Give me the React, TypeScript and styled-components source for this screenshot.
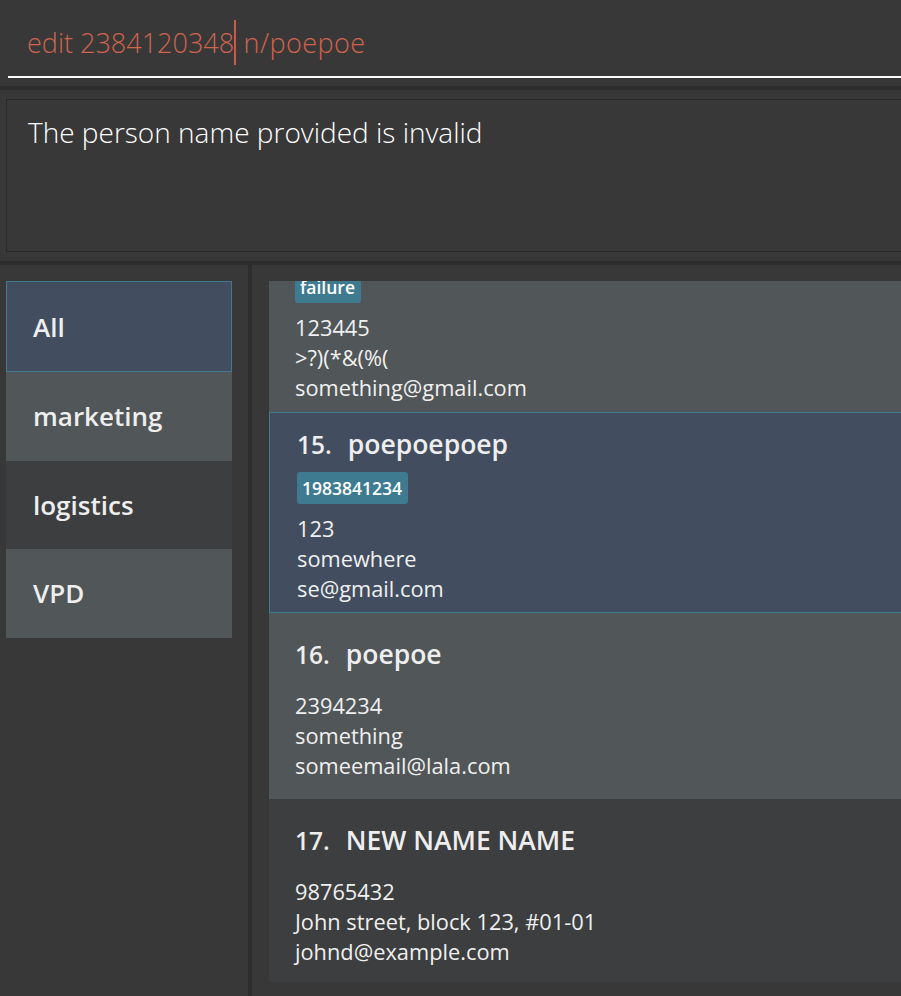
import React, { useLayoutEffect, useRef } from "react";
import styled, { createGlobalStyle } from "styled-components";

const GlobalStyle = createGlobalStyle`
  html, body { margin: 0; padding: 0; background: #383838; }
  body { font-family: "Open Sans", "Noto Sans", sans-serif; }
  * { box-sizing: border-box; }
`;

const Viewport = styled.div`
  width: 901px;
  height: 996px;
  overflow: hidden;
  background: #383838;
`;

const Frame = styled.div`
  width: 960px;
  height: 996px;
  display: flex;
  flex-direction: column;
`;

const CommandBar = styled.div`
  height: 86px;
  flex: none;
  padding-left: 8px;
`;

const CommandField = styled.div`
  height: 78px;
  border-bottom: 2px solid #ffffff;
  padding: 20px 0 0 19px;
  display: flex;
  align-items: flex-start;
  white-space: pre;
  font-weight: 300;
  font-size: 27px;
  line-height: 45px;
  color: #d0644e;
`;

const CommandTail = styled.span`
  letter-spacing: 0.4px;
`;

const Caret = styled.span`
  display: inline-block;
  width: 2px;
  height: 45px;
  background: #c95a44;
`;

const Band = styled.div`
  height: 4px;
  flex: none;
  background: #2d2d2d;
`;

const ResultPane = styled.div`
  flex: none;
  padding: 9px 0 9px 6px;
`;

const ResultBox = styled.div`
  height: 153px;
  border: 1px solid #2a2a2a;
  padding: 15px 0 0 21px;
  font-weight: 300;
  font-size: 28px;
  line-height: 34px;
  color: #ffffff;
`;

const Main = styled.div`
  flex: 1;
  min-height: 0;
  display: flex;
`;

const Sidebar = styled.div`
  width: 248px;
  flex: none;
  padding: 16px 16px 0 6px;
`;

const VDivider = styled.div`
  width: 4px;
  flex: none;
  background: #2d2d2d;
`;

type Tone = "sel" | "light" | "dark";

const toneBg = (t: Tone) =>
  t === "sel" ? "#424d5f" : t === "light" ? "#515658" : "#3c3e3f";

const TagItem = styled.div<{ $tone: Tone }>`
  height: ${(p) => (p.$tone === "sel" ? 91 : 88.5)}px;
  display: flex;
  align-items: center;
  padding-left: ${(p) => (p.$tone === "sel" ? 26 : 27)}px;
  font-weight: 600;
  font-size: 26px;
  color: #eeeeee;
  background: ${(p) => toneBg(p.$tone)};
  border: ${(p) => (p.$tone === "sel" ? "1px solid #3e7b91" : "none")};
`;

const ListPanel = styled.div`
  flex: 1;
  min-width: 0;
  padding: 16px 0 14px 17px;
  display: flex;
`;

const ListScroll = styled.div`
  flex: 1;
  overflow: hidden;
`;

const Card = styled.div<{ $tone: Tone; $tagged: boolean }>`
  display: flex;
  flex-direction: column;
  align-items: flex-start;
  padding: ${(p) => (p.$tagged ? "17px 0 9px 26px" : "26px 0 18px 26px")};
  background: ${(p) => toneBg(p.$tone)};
  border: ${(p) => (p.$tone === "sel" ? "1px solid #3e7b91" : "none")};
  ${(p) =>
    p.$tone === "sel" ? "padding-top: 16px; padding-bottom: 8px; padding-left: 27px;" : ""}
`;

const NameRow = styled.div`
  display: flex;
  align-items: baseline;
  gap: 16px;
  font-weight: 600;
  line-height: 30px;
  color: #eeeeee;
`;

const IdLabel = styled.span`
  font-size: 24.5px;
`;

const NameLabel = styled.span`
  font-size: 26.5px;
`;

const Tags = styled.div`
  display: flex;
  gap: 6px;
  margin: 12px 0 10px;
`;

const Tag = styled.span`
  height: 32px;
  padding: 0 6px 0 5px;
  border-radius: 3px;
  background: #3e7b91;
  font-weight: 600;
  font-size: 17.5px;
  line-height: 32px;
  color: #ffffff;
`;

const Details = styled.div<{ $tagged: boolean }>`
  margin-top: ${(p) => (p.$tagged ? 0 : 21)}px;
  display: flex;
  flex-direction: column;
`;

const Detail = styled.div`
  font-size: 21.8px;
  line-height: 30px;
  color: #f0f0f0;
`;

type Person = {
  id: number;
  name: string;
  tags: string[];
  phone: string;
  address: string;
  email: string;
  tone: Tone;
};

const people: Person[] = [
  { id: 14, name: "failure", tags: ["failure"], phone: "123445", address: ">?)(*&(%(", email: "something@gmail.com", tone: "light" },
  { id: 15, name: "poepoepoep", tags: ["1983841234"], phone: "123", address: "somewhere", email: "se@gmail.com", tone: "sel" },
  { id: 16, name: "poepoe", tags: [], phone: "2394234", address: "something", email: "someemail@lala.com", tone: "light" },
  { id: 17, name: "NEW NAME NAME", tags: [], phone: "98765432", address: "John street, block 123, #01-01", email: "johnd@example.com", tone: "dark" },
];

const groups: { label: string; tone: Tone }[] = [
  { label: "All", tone: "sel" },
  { label: "marketing", tone: "light" },
  { label: "logistics", tone: "dark" },
  { label: "VPD", tone: "light" },
];

export default function App() {
  const scrollRef = useRef<HTMLDivElement>(null);
  useLayoutEffect(() => {
    if (scrollRef.current) scrollRef.current.scrollTop = 70;
  }, []);

  return (
    <>
      <GlobalStyle />
      <Viewport>
        <Frame>
          <CommandBar>
            <CommandField>
              <span>edit 2384120348</span>
              <Caret />
              <CommandTail> n/poepoe</CommandTail>
            </CommandField>
          </CommandBar>
          <Band />
          <ResultPane>
            <ResultBox>The person name provided is invalid</ResultBox>
          </ResultPane>
          <Band />
          <Main>
            <Sidebar>
              {groups.map((g) => (
                <TagItem key={g.label} $tone={g.tone}>
                  {g.label}
                </TagItem>
              ))}
            </Sidebar>
            <VDivider />
            <ListPanel>
              <ListScroll ref={scrollRef}>
                {people.map((p) => {
                  const tagged = p.tags.length > 0;
                  return (
                    <Card key={p.id} $tone={p.tone} $tagged={tagged}>
                      <NameRow>
                        <IdLabel>{p.id}.</IdLabel>
                        <NameLabel>{p.name}</NameLabel>
                      </NameRow>
                      {tagged && (
                        <Tags>
                          {p.tags.map((t) => (
                            <Tag key={t}>{t}</Tag>
                          ))}
                        </Tags>
                      )}
                      <Details $tagged={tagged}>
                        <Detail>{p.phone}</Detail>
                        <Detail>{p.address}</Detail>
                        <Detail>{p.email}</Detail>
                      </Details>
                    </Card>
                  );
                })}
              </ListScroll>
            </ListPanel>
          </Main>
        </Frame>
      </Viewport>
    </>
  );
}
